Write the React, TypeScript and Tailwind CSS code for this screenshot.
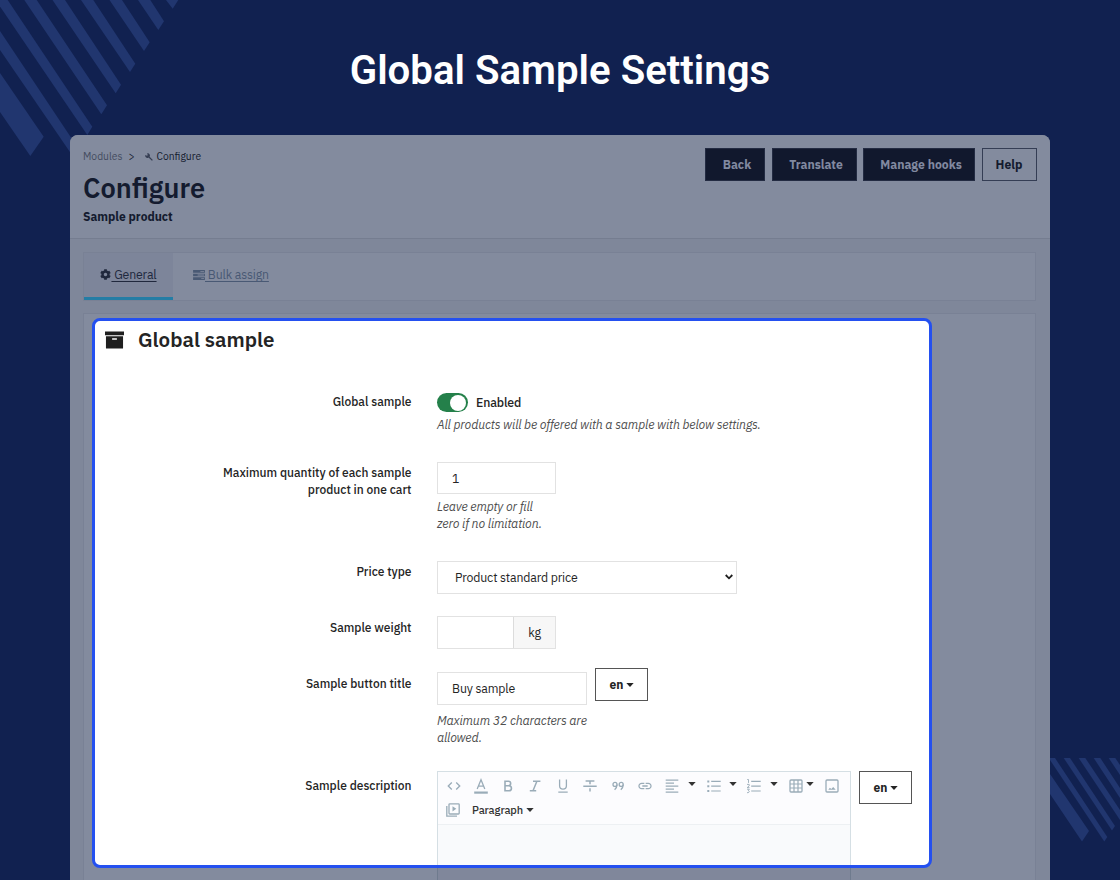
import type { ReactNode } from 'react'
import { FaCog } from 'react-icons/fa'
import { MdCode, MdLink } from 'react-icons/md'

const TOP_STRIPES = [
  '0,73 43.7,136.7 30.3,156 0,112',
  '0,31 78,148 72.7,156 0,50',
  '-4.5,0 7.7,0 92.3,126.7 87.3,135',
  '24.3,0 36.7,0 107,105.3 101.3,114.3',
  '52.5,0 65,0 121,84.7 115.7,93.3',
  '81,0 93.3,0 135.3,63.7 130,72',
  '109.5,0 122,0 149.7,42.3 144,51',
  '138,0 150.3,0 164,21.3 158.3,30',
  '166,0 178.3,0 172.7,8.7',
]

const BOTTOM_STRIPES = [
  '0,16 39,73 32,83.5 0,36',
  '0,0 5,0 57.3,79 54.3,83.5 0,2',
  '13.7,0 20,0 65,68 62,72.5',
  '28.7,0 35.3,0 70,52 70,62',
  '43.7,0 50.3,0 70,30 70,40',
  '58.7,0 65.3,0 70,7 70,17',
]

function Caret({ className = '' }: { className?: string }) {
  return (
    <svg viewBox="0 0 8 4" className={`h-1 w-2 shrink-0 ${className}`} fill="currentColor">
      <path d="M0.3 0h7.4L4 4z" />
    </svg>
  )
}

function Icon({ className = '', children }: { className?: string; children: ReactNode }) {
  return (
    <svg viewBox="0 0 16 16" className={`size-4 shrink-0 ${className}`} fill="none" stroke="currentColor" strokeWidth="1.3">
      {children}
    </svg>
  )
}

interface RowProps {
  label: ReactNode
  className: string
  labelClassName?: string
  children: ReactNode
}

function Row({ label, className, labelClassName = 'pt-[2px]', children }: RowProps) {
  return (
    <div className={`flex ${className}`}>
      <div className={`mr-[25.5px] w-[316.5px] shrink-0 text-right text-[12px] font-medium leading-[17px] tracking-normal ${labelClassName}`}>
        {label}
      </div>
      {children}
    </div>
  )
}

function LangButton() {
  return (
    <button className="flex h-[33px] w-[53px] shrink-0 items-center justify-center gap-[3px] border border-[#555] pl-px text-[12px] font-bold tracking-normal">
      en <Caret />
    </button>
  )
}

function Hint({ className = '', children }: { className?: string; children: ReactNode }) {
  return <p className={`italic leading-[17px] whitespace-nowrap text-[#4f4f4f] ${className}`}>{children}</p>
}

function Toolbar() {
  return (
    <div className="h-[53px] border-b border-[#edf0f3] bg-[#fcfcfe] text-[#9aacb8]">
      <div className="flex h-[28px] items-center pl-[7.5px] text-[16px]">
        <MdCode className="mr-[11px] shrink-0" />
        <Icon className="mr-[11px]">
          <path d="M4.2 11L8 1.8L11.8 11M5.5 8.1h5" />
          <path d="M1.2 14.6h13.6" strokeWidth="2.2" />
        </Icon>
        <Icon className="mr-[11px]">
          <path d="M5 3.2h3.4a2.2 2.2 0 0 1 0 4.5H5zM5 7.7h3.9a2.5 2.5 0 0 1 0 5.1H5z" strokeWidth="1.6" />
        </Icon>
        <Icon className="mr-[12px]">
          <path d="M6 3.3h7.4M2.8 12.7h6.4M9.9 3.3L6 12.7" strokeWidth="1.5" />
        </Icon>
        <Icon className="mr-[11px]">
          <path d="M4.6 1.6v6.2a3.4 3.4 0 0 0 6.8 0V1.6M3.3 14.1h9.4" />
        </Icon>
        <Icon className="mr-[12px]">
          <path d="M3.6 3h8.8M1.3 8.2h13.4M8 3v3.2M8 10.3v3.2" strokeWidth="1.5" />
        </Icon>
        <Icon className="mr-[11px]">
          <circle cx="5" cy="6.4" r="2" />
          <path d="M7 6.4c0 2.4-0.9 4-2.4 5.4" />
          <circle cx="11.2" cy="6.4" r="2" />
          <path d="M13.2 6.4c0 2.4-0.9 4-2.4 5.4" />
        </Icon>
        <MdLink className="mr-[11px] shrink-0" />
        <Icon>
          <path d="M1.7 2.2h12.6M1.7 5.2h8.3M1.7 8.2h12.6M1.7 11.2h8.3M1.7 14.2h12.6" strokeWidth="1.2" />
        </Icon>
        <Caret className="mr-[10px] ml-[8px] -mt-1 text-[#333]" />
        <Icon>
          <path d="M5.2 3.4h9.5M5.2 8.2h9.5M5.2 13h9.5" strokeWidth="1.2" />
          <path d="M1.3 3.4h2M1.3 8.2h2M1.3 13h2" strokeWidth="2" />
        </Icon>
        <Caret className="mr-[9px] ml-[7px] -mt-1 text-[#333]" />
        <Icon>
          <path d="M5.2 3.4h9.5M5.2 8.2h9.5M5.2 13h9.5" strokeWidth="1.2" />
          <path d="M1.2 1.5h1.3v3.4M1 6.4h2.2v1.4L1.2 9.6h2.3M1 11.2h2.3l-1 1.5c1.8 0 1.3 2.3-1.3 2" strokeWidth="0.9" />
        </Icon>
        <Caret className="mr-[10px] ml-[8px] -mt-1 text-[#333]" />
        <Icon>
          <rect x="2" y="2" width="12" height="12" rx="1" />
          <path d="M6 2v12M10 2v12M2 6h12M2 10h12" strokeWidth="1.2" />
        </Icon>
        <Caret className="mr-[10px] ml-[2px] -mt-1 text-[#333]" />
        <Icon>
          <rect x="2" y="2" width="12" height="12" rx="1" />
          <path d="M4.3 11.8l1.6-2 1.4 1.1 1.9-2 2.5 2.9z" fill="currentColor" stroke="none" />
        </Icon>
      </div>
      <div className="flex h-[20px] items-center pl-[7px]">
        <Icon>
          <rect x="4" y="1.8" width="10.2" height="10.2" rx="0.8" />
          <path d="M1.8 4v10.2H12" />
          <path d="M7.5 4.2v5.2L11.3 6.8z" fill="currentColor" stroke="none" />
        </Icon>
        <span className="ml-[11px] text-[11px] font-medium tracking-[-0.1px] text-[#333]">Paragraph</span>
        <Caret className="ml-[3px] text-[#333]" />
      </div>
    </div>
  )
}

function GlobalSampleForm() {
  return (
    <div className="ml-[8px] h-[550px] w-[840px] overflow-hidden rounded-lg border-3 border-[#2450f0] bg-white text-[12.3px] tracking-[-0.14px] text-[#242424]">
      <div className="flex h-[38px] items-center pl-[10px]">
        <svg viewBox="0 0 20 18" className="mr-[14px] h-[18px] w-[19px]" fill="#1f1f1f">
          <path d="M0 0h20v4H0z" />
          <path fillRule="evenodd" d="M1 5h18v13H1zM7.5 7.2v1.6h5V7.2z" />
        </svg>
        <h3 className="text-[20.5px] font-semibold tracking-normal">Global sample</h3>
      </div>

      <Row label="Global sample" className="mt-[31px] h-[72px]" labelClassName="pt-[3px]">
        <div>
          <div className="flex items-center pt-[3px]">
            <span className="flex h-[19px] w-[31px] items-center justify-end rounded-full bg-[#24804a] pr-[2px]">
              <span className="size-[16px] rounded-full bg-white" />
            </span>
            <span className="ml-[8px] font-medium">Enabled</span>
          </div>
          <Hint className="mt-[4px]">All products will be offered with a sample with below settings.</Hint>
        </div>
      </Row>

      <Row label={<>Maximum quantity of each sample<br />product in one cart</>} className="h-[99px]">
        <div>
          <div className="flex h-[32px] w-[119px] items-center border border-[#e2e2e2] pl-[14px]">1</div>
          <Hint className="mt-[4px]">Leave empty or fill<br />zero if no limitation.</Hint>
        </div>
      </Row>

      <Row label="Price type" className="h-[55px]">
        <div className="flex h-[33px] w-[300px] items-center justify-between border border-[#e2e2e2] pr-[3px] pb-px pl-[17px]">
          Product standard price
          <svg viewBox="0 0 8 6" className="h-[6px] w-2" fill="none" stroke="#1f1f1f" strokeWidth="1.8">
            <path d="M0.7 1L4 4.3L7.3 1" />
          </svg>
        </div>
      </Row>

      <Row label="Sample weight" className="h-[56px]" labelClassName="pt-[3px]">
        <div className="flex h-[33px] w-[119px] border border-[#e2e2e2]">
          <div className="w-[76px] border-r border-[#dcdcdc]" />
          <div className="flex flex-1 items-center justify-center bg-[#f7f7f7]">kg</div>
        </div>
      </Row>

      <Row label="Sample button title" className="h-[99px]" labelClassName="pt-[3px]">
        <div className="w-[150px]">
          <div className="flex h-[33px] items-center border border-[#e2e2e2] pl-[14px]">Buy sample</div>
          <Hint className="mt-[7px]">Maximum 32 characters are<br />allowed.</Hint>
        </div>
        <div className="-mt-[4px] ml-[8px]">
          <LangButton />
        </div>
      </Row>

      <Row label="Sample description" className="h-[95px]" labelClassName="pt-[6px]">
        <div className="h-[95px] w-[414px] border border-b-0 border-[#d5dfe4] bg-[#f9fafc]">
          <Toolbar />
        </div>
        <div className="ml-[8px]">
          <LangButton />
        </div>
      </Row>
    </div>
  )
}

export default function App() {
  return (
    <div className="relative flex h-[880px] w-[1120px] flex-col overflow-hidden bg-[#112150] font-['IBM_Plex_Sans',Roboto,sans-serif]">
      <svg className="absolute top-0 left-0" width="180" height="160" fill="#21366f">
        {TOP_STRIPES.map((points) => (
          <polygon key={points} points={points} />
        ))}
      </svg>
      <svg className="absolute top-[758px] right-0" width="70" height="90" fill="#21366f">
        {BOTTOM_STRIPES.map((points) => (
          <polygon key={points} points={points} />
        ))}
      </svg>

      <h1 className="flex h-[135px] shrink-0 items-center justify-center pt-[8px] font-[Roboto] text-[40.2px] font-semibold text-white">
        Global Sample Settings
      </h1>

      <main className="relative mx-[70px] flex-1 rounded-t-lg bg-[#7f879a] text-[#141b2f]">
        <header className="flex h-[104px] justify-between rounded-t-lg border-b border-[#757d90] bg-[#838b9e] pt-[13px] pr-[13.5px] pl-[13px]">
          <div>
            <div className="mt-px flex h-4 items-center text-[10.3px]">
              <span className="text-[#434b60]">Modules</span>
              <span className="ml-[6px]">&gt;</span>
              <svg viewBox="0 0 8 8" className="mr-[4px] ml-[10px] size-2" fill="none" stroke="#363e53" strokeWidth="1.3">
                <path d="M3.1 0.8a1.8 1.8 0 1 1-2.3 2.3l1.6 0.3l0.9-0.9zM4.2 4.2l3.2 3.2" />
              </svg>
              <span>Configure</span>
            </div>
            <h2 className="mt-[5px] text-[27.2px] font-semibold leading-[36px]">Configure</h2>
            <p className="mt-[2px] text-[12px] font-bold leading-[18px]">Sample product</p>
          </div>
          <div className="flex h-[33px] gap-[6.5px] text-[12.2px] font-bold">
            <button className="w-[60px] border border-[#232b42] bg-[#11182d] pl-[4px] text-[#8189a0]">Back</button>
            <button className="w-[85px] border border-[#232b42] bg-[#11182d] pl-[4px] text-[#8189a0]">Translate</button>
            <button className="w-[112px] border border-[#232b42] bg-[#11182d] pl-[4px] text-[#8189a0]">Manage hooks</button>
            <button className="w-[55px] border border-[#343d54]">Help</button>
          </div>
        </header>

        <nav className="mr-[14px] ml-[13px] mt-[13px] flex h-[49px] border border-[#798195] bg-[#838b9e] text-[12.3px] tracking-[-0.15px]">
          <div className="flex w-[89px] items-center justify-center border-b-[3px] border-[#247da5] bg-[#7d859a] pb-px text-[#20283d]">
            <FaCog className="size-[11px]" />
            <span className="underline underline-offset-2">&nbsp;General</span>
          </div>
          <div className="flex items-center pb-[4px] pl-[20px] text-[#495974]">
            <svg viewBox="0 0 13 11" className="h-[10px] w-[12px]" fill="currentColor">
              <path fillRule="evenodd" d="M0 0h13v3H0zM8 1v1h4V1zM0 4h13v3H0zM5 5v1h7V5zM0 8h13v3H0zM9 9v1h3V9z" />
            </svg>
            <span className="underline underline-offset-2">&nbsp;Bulk assign</span>
          </div>
        </nav>

        <section className="mr-[14px] ml-[13px] mt-[12px] h-[567px] border border-b-0 border-[#798195] bg-[#838b9e] pt-[4px]">
          <GlobalSampleForm />
          <div className="ml-[353px] h-[12px] w-[414px] border-x border-[#6f7b8e] bg-[#80879b]" />
        </section>
      </main>
    </div>
  )
}
